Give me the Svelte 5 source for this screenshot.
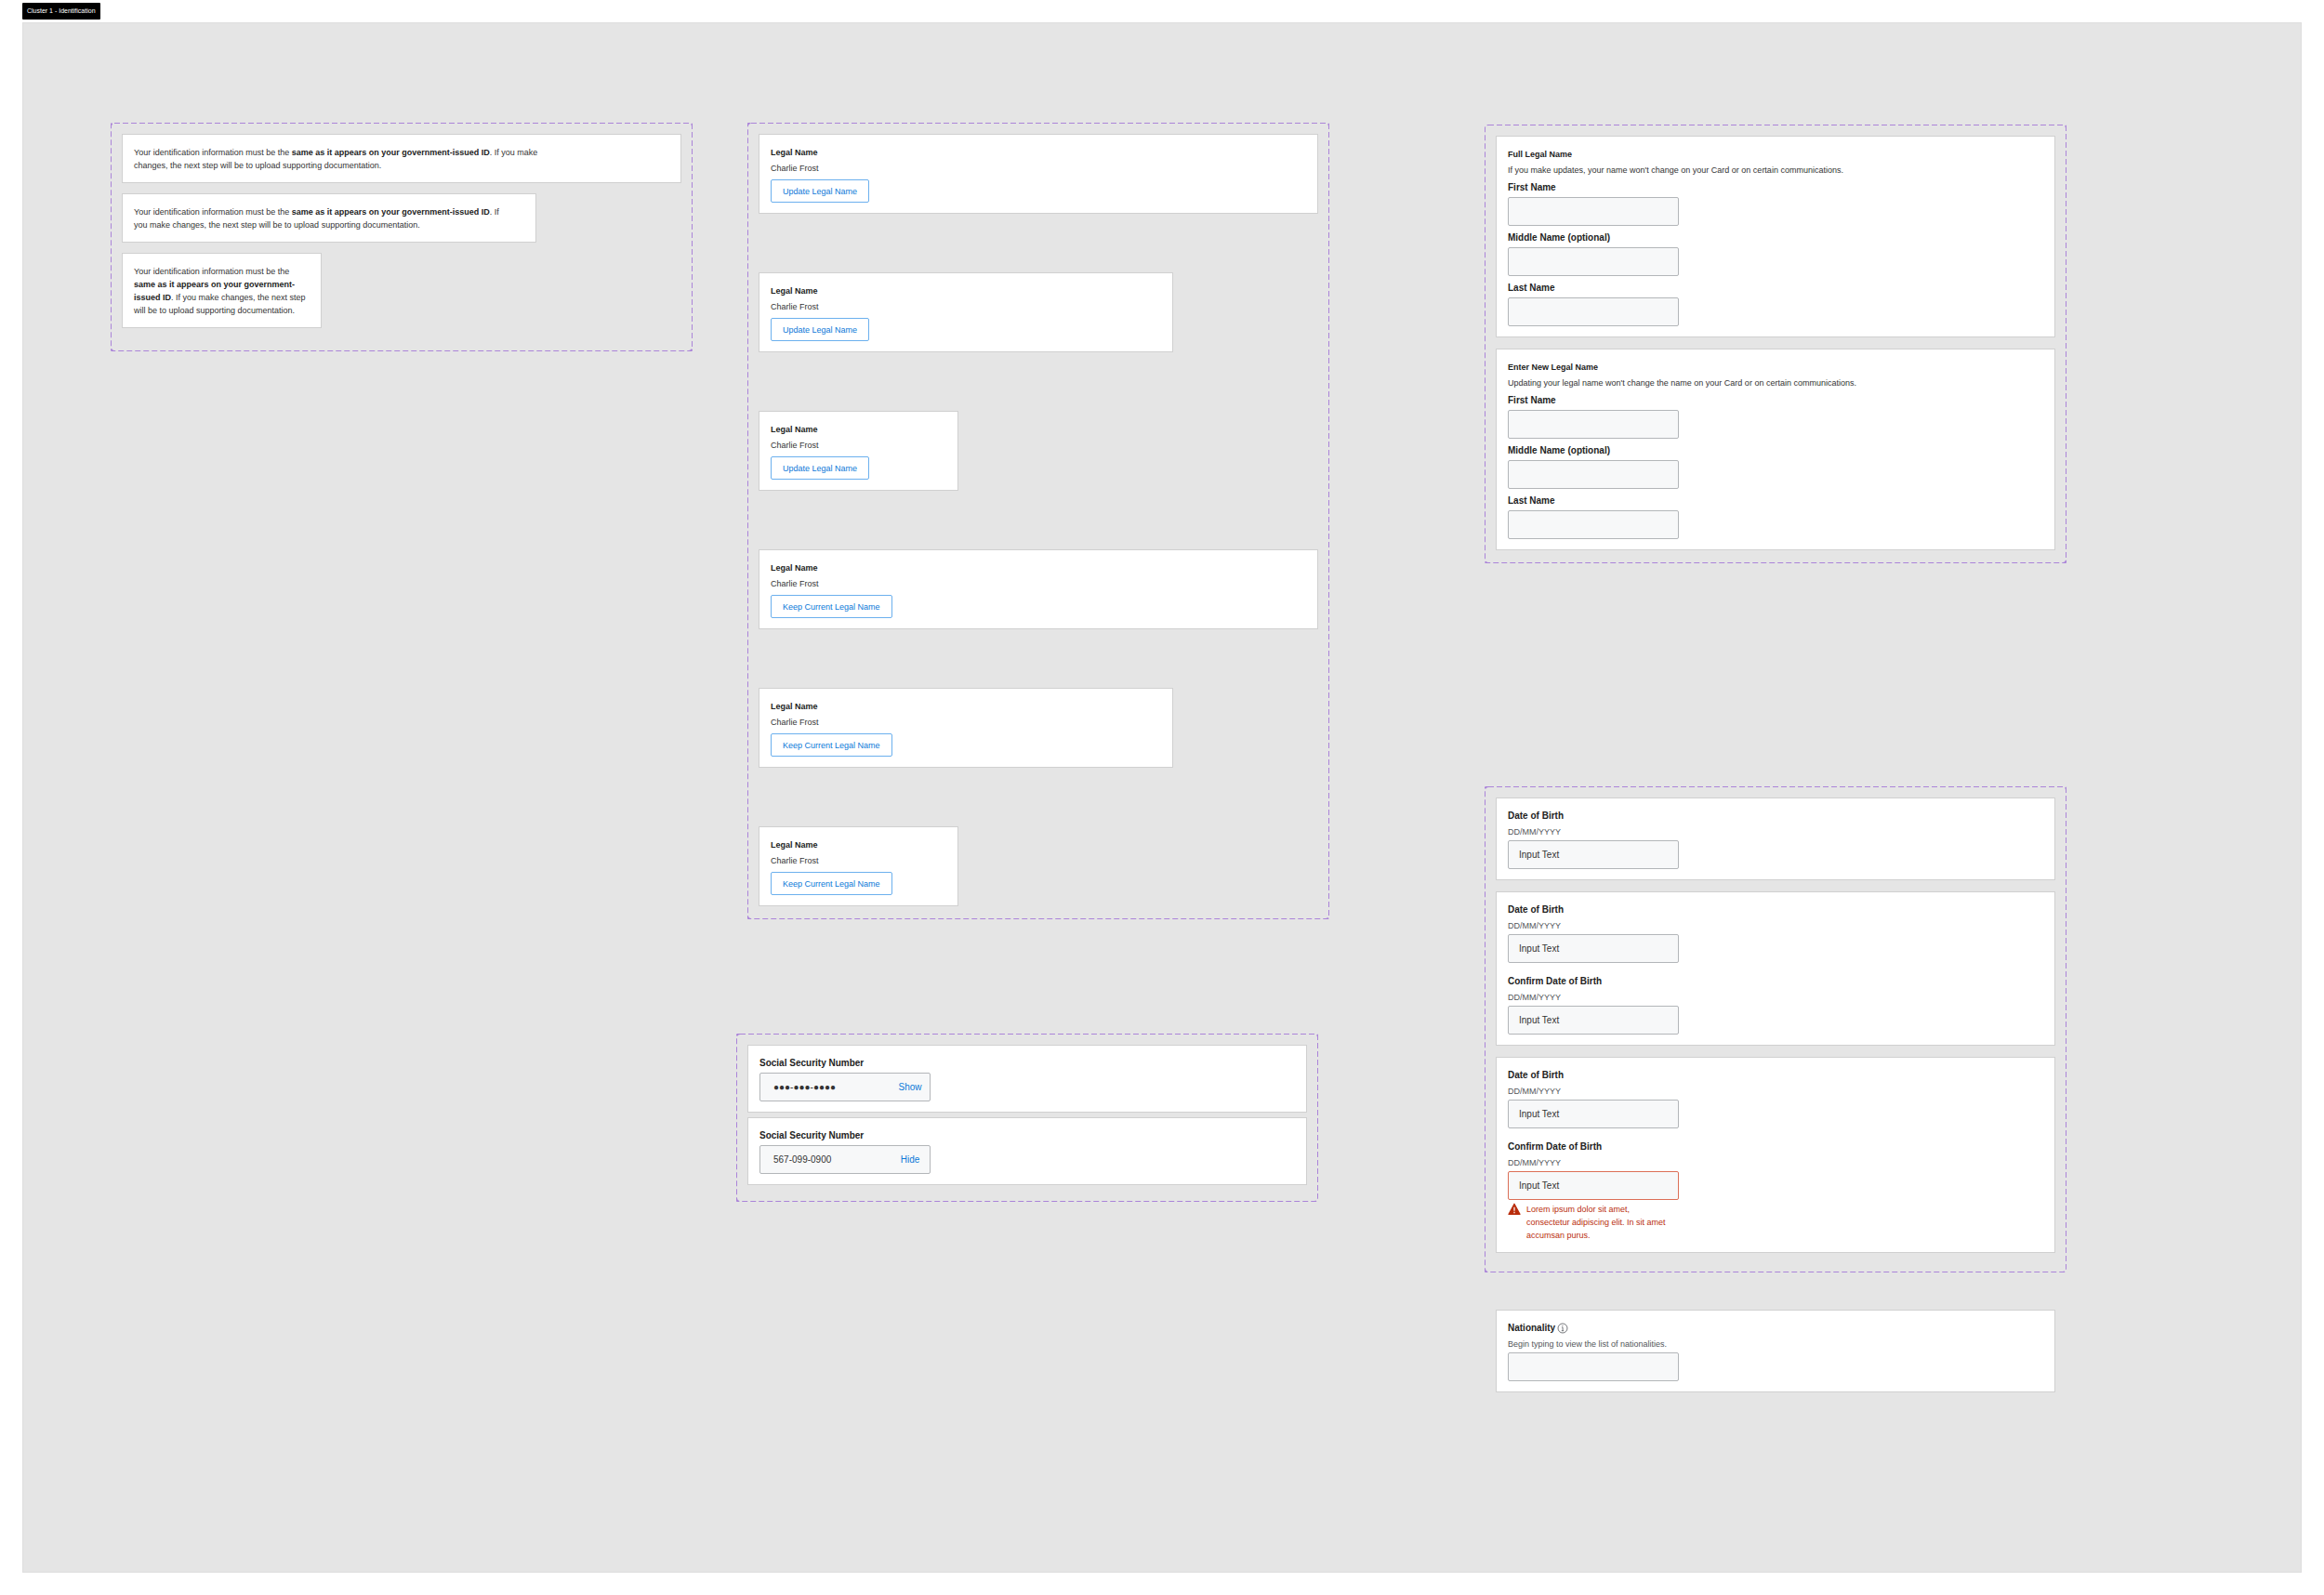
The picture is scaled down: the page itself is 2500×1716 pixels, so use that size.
<script>
  const widths = ['wide', 'medium', 'narrow'];
  const actions = ['Update Legal Name', 'Keep Current Legal Name'];

  const nameForms = [
    {
      id: 'full',
      title: 'Full Legal Name',
      hint: "If you make updates, your name won't change on your Card or on certain communications.",
    },
    {
      id: 'new',
      title: 'Enter New Legal Name',
      hint: "Updating your legal name won't change the name on your Card or on certain communications.",
    },
  ];
  const nameFields = ['First Name', 'Middle Name (optional)', 'Last Name'];

  const birthForms = [
    [{ label: 'Date of Birth' }],
    [{ label: 'Date of Birth' }, { label: 'Confirm Date of Birth' }],
    [
      { label: 'Date of Birth' },
      {
        label: 'Confirm Date of Birth',
        error: 'Lorem ipsum dolor sit amet, consectetur adipiscing elit. In sit amet accumsan purus.',
      },
    ],
  ];

  const ssnFields = [
    { value: '●●●-●●●-●●●●', action: 'Show' },
    { value: '567-099-0900', action: 'Hide' },
  ];
</script>

{#snippet outline()}
  <svg class="outline" aria-hidden="true"><rect width="100%" height="100%" rx="4" /></svg>
{/snippet}

<header>
  <span class="tag">Cluster 1 - Identification</span>
</header>

<main>
  <div class="column first">
    <section class="group notices">
      {@render outline()}
      {#each widths as width}
        <article class="card {width}">
          <p>
            Your identification information must be the <b>same as it appears on your government-issued ID</b>.
            If you make changes, the next step will be to upload supporting documentation.
          </p>
        </article>
      {/each}
    </section>
  </div>

  <div class="column second">
    <section class="group legal">
      {@render outline()}
      {#each actions as action}
        {#each widths as width}
          <article class="card {width}">
            <h2>Legal Name</h2>
            <p>Charlie Frost</p>
            <button class="outlined" type="button">{action}</button>
          </article>
        {/each}
      {/each}
    </section>

    <section class="group ssn">
      {@render outline()}
      {#each ssnFields as field, i}
        <article class="card">
          <label for="ssn-{i}">Social Security Number</label>
          <div class="box">
            <input id="ssn-{i}" type="text" value={field.value}>
            <button class="link" type="button">{field.action}</button>
          </div>
        </article>
      {/each}
    </section>
  </div>

  <div class="column third">
    <section class="group names">
      {@render outline()}
      {#each nameForms as form}
        <article class="card">
          <h2>{form.title}</h2>
          <p>{form.hint}</p>
          <div class="fields">
            {#each nameFields as label, i}
              <div>
                <label for="{form.id}-{i}">{label}</label>
                <input id="{form.id}-{i}" type="text">
              </div>
            {/each}
          </div>
        </article>
      {/each}
    </section>

    <section class="group births">
      {@render outline()}
      {#each birthForms as fields, i}
        <article class="card">
          {#each fields as field, j}
            <div class="hinted">
              <label for="dob-{i}-{j}">{field.label}</label>
              <p class="hint">DD/MM/YYYY</p>
              <input id="dob-{i}-{j}" class:invalid={field.error} type="text" value="Input Text">
              {#if field.error}
                <div class="error">
                  <svg width="14" height="14" viewBox="0 0 14 14" aria-hidden="true">
                    <path d="M7 1.2L13 12.4H1Z" fill="#b92d0c" stroke="#b92d0c" stroke-width="1.2" stroke-linejoin="round" />
                    <path d="M7 4.8V8.8M7 9.8V11.2" stroke="#fff" stroke-width="1.2" />
                  </svg>
                  <p>{field.error}</p>
                </div>
              {/if}
            </div>
          {/each}
        </article>
      {/each}
    </section>

    <article class="card nationality">
      <div class="hinted">
        <div class="title">
          <label for="nationality">Nationality</label>
          <svg width="12" height="12" viewBox="0 0 12 12" aria-hidden="true">
            <circle cx="6" cy="6" r="5" fill="none" stroke="#53565a" stroke-width="0.8" />
            <path d="M5.9 3V4M5 5.1H6.1V8.7M4.8 8.7H7.2" fill="none" stroke="#53565a" stroke-width="0.8" />
          </svg>
        </div>
        <p class="hint">Begin typing to view the list of nationalities.</p>
        <input id="nationality" type="text">
      </div>
    </article>
  </div>
</main>

<style>
  :global(body) {
    background: #fff;
    color: #333;
    font: 9px/14px "Liberation Sans", Arial, sans-serif;
  }

  header {
    display: flex;
    align-items: center;
    height: 24px;
    padding: 0 24px;
  }

  .tag {
    padding: 2px 5px;
    border-radius: 1px;
    background: #000;
    color: #fff;
    font-size: 7px;
  }

  main {
    display: grid;
    grid-template-columns: 95fr 626fr 47fr 638fr 167fr 626fr 253fr;
    align-items: start;
    margin: 0 24px 24px;
    padding: 108px 0 194px;
    background: #e5e5e5;
    box-shadow: inset 0 0 0 1px #dedede;
  }

  .column {
    min-width: 0;
  }

  .first {
    grid-column: 2;
  }

  .second {
    grid-column: 4;
  }

  .third {
    grid-column: 6;
    padding-top: 2px;
  }

  .group {
    position: relative;
    display: flex;
    flex-direction: column;
    gap: 12px;
    padding: 12px 12px 14px;
  }

  /* the outer half of the 2px stroke is clipped, leaving a sharp 1px line */
  .outline {
    position: absolute;
    inset: 0;
    width: 100%;
    height: 100%;
    overflow: hidden;
    pointer-events: none;
  }

  .outline rect {
    fill: none;
    stroke: #ab84d9;
    stroke-width: 2px;
    stroke-dasharray: 6 3;
  }

  .card {
    box-sizing: border-box;
    max-width: 100%;
    padding: 12px 12px 11px;
    border: 1px solid #d0d0d0;
    background: #fff;
  }

  .medium {
    width: 446px;
  }

  .narrow {
    width: 215px;
  }

  h2,
  p {
    margin: 0;
    font-size: 9px;
  }

  h2,
  b,
  label {
    color: #222;
    font-weight: bold;
  }

  h2,
  label {
    display: block;
    margin-bottom: 3px;
  }

  label {
    font-size: 10px;
  }

  input {
    display: block;
    box-sizing: border-box;
    width: 184px;
    max-width: 100%;
    height: 31px;
    padding: 0 11px;
    border: 1px solid #b3b6b9;
    border-radius: 2px;
    background: #f7f8f9;
    color: #333;
    font: inherit;
    font-size: 10px;
  }

  button {
    font: inherit;
    color: #0b78d8;
    cursor: pointer;
  }

  .notices {
    gap: 11px;
    padding-bottom: 25px;
  }

  .notices .wide p {
    max-width: 450px;
  }

  .notices .medium p {
    max-width: 404px;
  }

  .legal {
    gap: 63px;
    margin-left: 12px;
  }

  .outlined {
    display: block;
    height: 25px;
    margin-top: 5px;
    padding: 0 12px;
    border: 1px solid #6cb0ee;
    border-radius: 2px;
    background: #fff;
  }

  .ssn {
    gap: 5px;
    margin: 123px 12px 0 0;
    padding-bottom: 18px;
  }

  .box {
    position: relative;
    width: 184px;
  }

  .box input {
    padding: 0 48px 0 14px;
  }

  .link {
    position: absolute;
    top: 0;
    right: 4px;
    width: 36px;
    height: 31px;
    padding: 0;
    border: 0;
    background: none;
    font-size: 10px;
  }

  .fields {
    display: flex;
    flex-direction: column;
    gap: 6px;
    margin-top: 5px;
  }

  .births {
    margin-top: 240px;
    padding-bottom: 21px;
  }

  .hinted + .hinted {
    margin-top: 13px;
  }

  .hint {
    margin-bottom: 2px;
    color: #53565a;
  }

  .invalid {
    border-color: #dc6f57;
  }

  .error {
    display: flex;
    gap: 6px;
    width: 176px;
    margin-top: 3px;
    color: #b92d0c;
  }

  .error svg {
    flex: none;
  }

  .nationality {
    margin: 40px 12px 0;
  }

  .title {
    display: flex;
    gap: 2px;
  }

  .title svg {
    margin-top: 1px;
  }
</style>
